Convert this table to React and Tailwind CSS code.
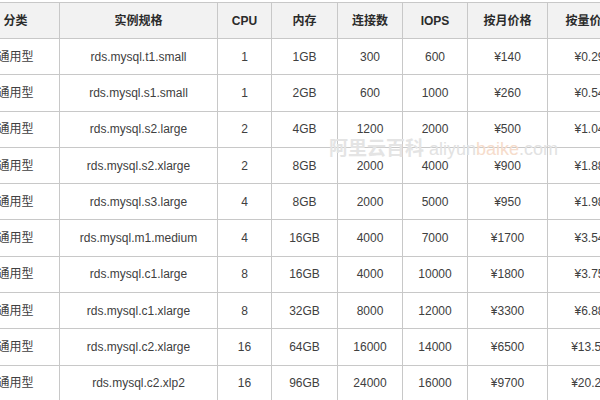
import React from 'react';

const cols = [88, 158, 54, 66, 65, 65, 80, 84];
const headers = ['分类', '实例规格', 'CPU', '内存', '连接数', 'IOPS', '按月价格', '按量价格'];

const rows = [
  ['通用型', 'rds.mysql.t1.small', '1', '1GB', '300', '600', '¥140', '¥0.29'],
  ['通用型', 'rds.mysql.s1.small', '1', '2GB', '600', '1000', '¥260', '¥0.54'],
  ['通用型', 'rds.mysql.s2.large', '2', '4GB', '1200', '2000', '¥500', '¥1.04'],
  ['通用型', 'rds.mysql.s2.xlarge', '2', '8GB', '2000', '4000', '¥900', '¥1.88'],
  ['通用型', 'rds.mysql.s3.large', '4', '8GB', '2000', '5000', '¥950', '¥1.98'],
  ['通用型', 'rds.mysql.m1.medium', '4', '16GB', '4000', '7000', '¥1700', '¥3.54'],
  ['通用型', 'rds.mysql.c1.large', '8', '16GB', '4000', '10000', '¥1800', '¥3.75'],
  ['通用型', 'rds.mysql.c1.xlarge', '8', '32GB', '8000', '12000', '¥3300', '¥6.88'],
  ['通用型', 'rds.mysql.c2.xlarge', '16', '64GB', '16000', '14000', '¥6500', '¥13.54'],
  ['通用型', 'rds.mysql.c2.xlp2', '16', '96GB', '24000', '16000', '¥9700', '¥20.21'],
];

const App = () => {
  return (
    <div
      className="relative w-[600px] h-[400px] overflow-hidden bg-white pt-[2px]"
      style={{ fontFamily: '"Liberation Sans", "Noto Sans CJK SC", sans-serif' }}
    >
      <table className="table-fixed border-collapse ml-[-29px] w-[660px]">
        <colgroup>
          {cols.map((w, i) => (
            <col key={i} style={{ width: w }} />
          ))}
        </colgroup>
        <thead>
          <tr className="bg-[#f2f2f2]">
            {headers.map((h) => (
              <th
                key={h}
                className="h-[36px] p-0 border border-[#c8c8c8] text-center text-[12px] font-bold text-[#2b2b2b]"
              >
                {h}
              </th>
            ))}
          </tr>
        </thead>
        <tbody>
          {rows.map((r, i) => (
            <tr key={i}>
              {r.map((c, j) => (
                <td
                  key={j}
                  className="h-[36.3px] p-0 border border-[#c8c8c8] text-center text-[12px] text-[#404040]"
                >
                  {c}
                </td>
              ))}
            </tr>
          ))}
        </tbody>
      </table>

      {/* watermark */}
      <div className="absolute left-[329px] top-[135px] flex items-baseline gap-[5px] pointer-events-none">
        <span className="text-[19px] font-bold text-[#e4e4e4]">阿里云百科</span>
        <span className="text-[18px] text-[#e2e2e2]">
          aliyun<span className="text-[#f6dccb]">baike</span>.com
        </span>
      </div>
    </div>
  );
};

export default App;
